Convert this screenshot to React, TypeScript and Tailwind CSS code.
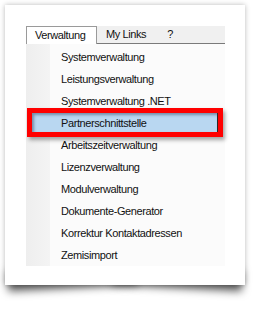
import React from "react";

const items = [
  "Systemverwaltung",
  "Leistungsverwaltung",
  "Systemverwaltung .NET",
  "Partnerschnittstelle",
  "Arbeitszeitverwaltung",
  "Lizenzverwaltung",
  "Modulverwaltung",
  "Dokumente-Generator",
  "Korrektur Kontaktadressen",
  "Zemisimport",
];

const App: React.FC = () => {
  return (
    <div className="w-[259px] h-[315px] bg-white overflow-hidden font-['Liberation_Sans',Arial,sans-serif] text-[11px] tracking-[-0.4px] text-[#111]">
      <div className="relative isolate ml-[5px] mt-[5px] w-[240px] h-[280px]">
        {/* lifted corner shadows */}
        <div className="absolute -z-10 left-[2px] bottom-[12px] w-[130px] h-[20px] bg-transparent shadow-[0_15px_8px_rgba(0,0,0,0.65)] rotate-[-3deg]" />
        <div className="absolute -z-10 right-[2px] bottom-[12px] w-[130px] h-[20px] bg-transparent shadow-[0_15px_8px_rgba(0,0,0,0.65)] rotate-[3deg]" />
        <div className="h-full w-full bg-white shadow-[0_0_5px_rgba(0,0,0,0.28)] pt-[21px] pl-[21px]">
          <div className="w-[199px]">
            {/* menu bar */}
            <div className="flex h-[18px] bg-[#f0f0f0] items-stretch">
              <div className="w-[71px] bg-white border-l border-t border-r border-[#9a9a9a] pl-[8px] leading-[17px]">
                Verwaltung
              </div>
              <div className="flex flex-1 border-b border-[#7a7a7a] leading-[17px]">
                <span className="pl-[9px]">My Links</span>
                <span className="pl-[21px]">?</span>
              </div>
            </div>
            {/* dropdown */}
            <div className="relative flex h-[222px] bg-[#fbfbfb]">
              <div className="w-[24px] bg-gradient-to-r from-[#eeeeee] to-[#f4f4f4]" />
              <div className="flex-1 pt-[2px]">
                {items.map((label, i) => (
                  <div
                    key={label}
                    className={
                      i === 3
                        ? "relative h-[22px] leading-[22px] pl-[11px]"
                        : "h-[22px] leading-[22px] pl-[11px]"
                    }
                  >
                    {i === 3 && (
                      <div className="absolute left-[-23px] top-[-4px] w-[196px] h-[29px] border-[5px] border-[#ff0000] shadow-[2px_3px_4px_rgba(0,0,0,0.35)]">
                        <div className="h-full w-full bg-[#b9d7f1] shadow-[inset_2px_2px_3px_rgba(60,80,110,0.55)] border-r border-[#2a2a2a]" />
                      </div>
                    )}
                    <span className="relative">{label}</span>
                  </div>
                ))}
              </div>
            </div>
          </div>
        </div>
      </div>
    </div>
  );
};

export default App;
